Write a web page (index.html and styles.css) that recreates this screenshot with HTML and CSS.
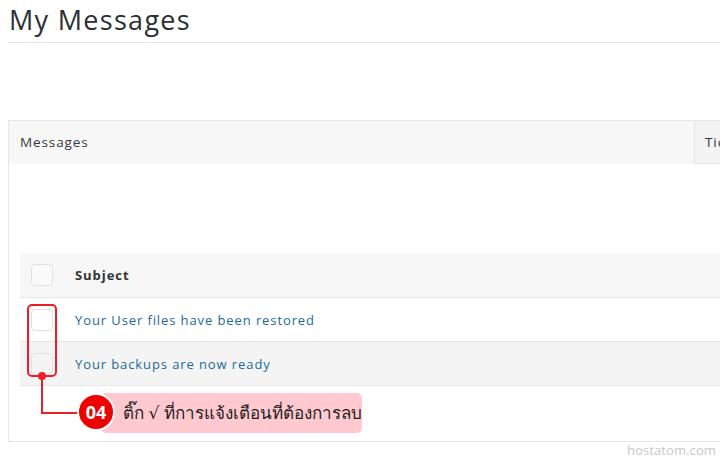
FILE: index.html
```html
<!DOCTYPE html>
<html>
<head>
<meta charset="utf-8">
<link rel="stylesheet" href="styles.css">
</head>
<body>
<div class="page">
  <div class="page-head">
    <h1 class="title">My Messages</h1>
  </div>
  <div class="panel">
    <div class="panel-tabs">
      <div class="tab tab-active">Messages</div>
      <div class="tab tab-next">Tickets</div>
    </div>
    <div class="panel-body">
      <div class="table">
        <div class="row row-head">
          <div class="cell-check"><span class="checkbox"></span></div>
          <div class="cell-subject head-text">Subject</div>
        </div>
        <div class="row">
          <div class="cell-check"><span class="checkbox"></span></div>
          <div class="cell-subject"><a class="link">Your User files have been restored</a></div>
        </div>
        <div class="row row-alt">
          <div class="cell-check"><span class="checkbox"></span></div>
          <div class="cell-subject"><a class="link">Your backups are now ready</a></div>
        </div>
      </div>
    </div>
    <div class="anno-box"></div>
    <div class="anno-dot"></div>
    <div class="anno-line"></div>
    <div class="anno-label">ติ๊ก √ ที่การแจ้งเตือนที่ต้องการลบ</div>
    <div class="anno-num">04</div>
  </div>
  <div class="watermark">hostatom.com</div>
</div>
</body>
</html>
```
FILE: styles.css
```css
html, body {
  margin: 0;
  padding: 0;
  background: #ffffff;
  overflow: hidden;
}
body {
  width: 720px;
  height: 459px;
  font-family: "Open Sans", "Noto Sans", sans-serif;
  color: #333;
}
.page {
  position: relative;
  width: 720px;
  height: 459px;
}
.page-head {
  margin-left: 8px;
  border-bottom: 1px solid #e6e6e6;
  height: 42px;
}
.title {
  margin: 0;
  padding: 2px 0 0 1px;
  font-family: "Open Sans", sans-serif;
  font-weight: 400;
  font-size: 27px;
  line-height: 36px;
  letter-spacing: 1.3px;
  color: #2b2f36;
}
.panel {
  position: relative;
  margin: 77px 0 0 8px;
  width: 740px;
  height: 320px;
  border: 1px solid #e6e6e6;
}
.panel-tabs {
  display: flex;
  height: 43px;
  background: #f7f7f7;
}
.tab {
  font-size: 13.5px;
  line-height: 43px;
  letter-spacing: 0.9px;
  color: #333a44;
  white-space: nowrap;
}
.tab-active {
  flex: 0 0 auto;
  width: 674px;
  padding-left: 11px;
}
.tab-next {
  flex: 1 1 auto;
  min-width: 0;
  padding-left: 10px;
  background: #f3f3f3;
  border-left: 1px solid #e6e6e6;
  border-bottom: 1px solid #e6e6e6;
  height: 42px;
}
.panel-body {
  padding: 89px 0 0 11px;
}
.table {
  width: 729px;
}
.row {
  display: flex;
  align-items: center;
  height: 43px;
  border-bottom: 1px solid #e6e6e6;
}
.row-head {
  height: 44px;
  background: #f7f7f7;
}
.row-alt {
  background: #f4f4f4;
}
.cell-check {
  width: 55px;
  padding-left: 11px;
  box-sizing: border-box;
  display: flex;
}
.checkbox {
  display: block;
  width: 20px;
  height: 20px;
  border: 1px solid #e2e2e2;
  border-radius: 4px;
  background: transparent;
}
.row-head .checkbox {
  background: #fafafa;
}
.cell-subject {
  font-size: 13px;
  letter-spacing: 0.9px;
}
.head-text {
  font-weight: 700;
  letter-spacing: 0.95px;
  color: #333;
}
.link {
  color: #1d6a9a;
  text-decoration: none;
}
.anno-box {
  position: absolute;
  left: 18px;
  top: 183px;
  width: 26px;
  height: 69px;
  border: 2px solid #ee1c25;
  border-radius: 5px;
}
.anno-dot {
  position: absolute;
  left: 29px;
  top: 251px;
  width: 8px;
  height: 8px;
  border-radius: 50%;
  background: #e8202a;
}
.anno-line {
  position: absolute;
  left: 32px;
  top: 255px;
  width: 40px;
  height: 36px;
  border-left: 2px solid #e8202a;
  border-bottom: 2px solid #e8202a;
}
.anno-label {
  position: absolute;
  left: 92px;
  top: 272px;
  width: 261px;
  height: 40px;
  padding-left: 22px;
  box-sizing: border-box;
  background: #ffc9cf;
  border-radius: 5px;
  font-family: "Noto Sans", "DejaVu Sans", sans-serif;
  font-size: 17px;
  line-height: 40px;
  color: #222;
  white-space: nowrap;
}
.anno-num {
  position: absolute;
  left: 68px;
  top: 272px;
  width: 34px;
  height: 34px;
  border: 2px solid #ffffff;
  border-radius: 50%;
  background: #ee0000;
  color: #ffffff;
  font-family: "Open Sans", sans-serif;
  font-weight: 700;
  font-size: 18px;
  line-height: 34px;
  text-align: center;
}
.watermark {
  position: absolute;
  right: 4px;
  top: 441px;
  font-size: 13px;
  line-height: 18px;
  letter-spacing: 0.1px;
  color: #c8c8c8;
}
```
